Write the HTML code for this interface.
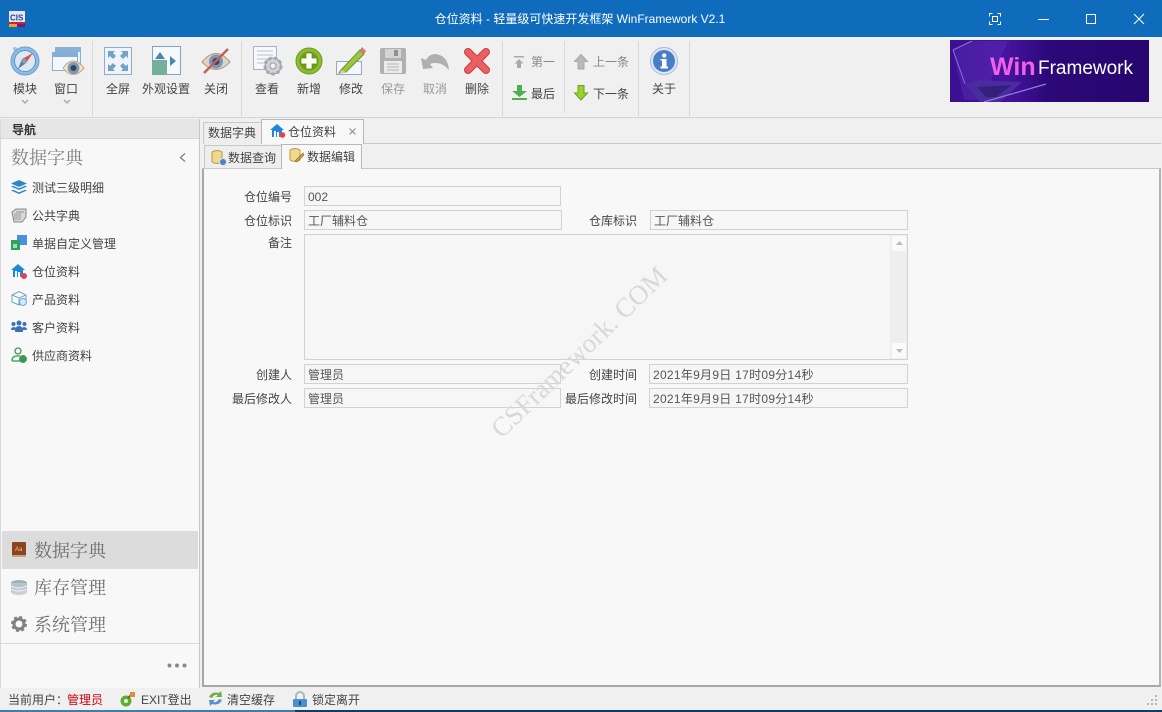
<!DOCTYPE html>
<html><head><meta charset="utf-8">
<style>
html,body{margin:0;padding:0;width:1162px;height:712px;overflow:hidden;background:#f0f0f0}
body{position:relative;font-family:"Liberation Sans","Noto Sans CJK SC",sans-serif;font-size:12px;color:#444}
.a{position:absolute}
.t{position:absolute;white-space:nowrap;line-height:16px;height:16px}
.c{transform:translateX(-50%)}
.r{text-align:right}
.sep{position:absolute;top:41px;width:1px;height:75px;background:#d8d8d8}
.gray{color:#9a9a9a}
.f{position:absolute;box-sizing:border-box;border:1px solid #d2d2d2;background:#f6f6f6;line-height:20px;padding-left:3px;color:#555;white-space:nowrap}
.d{letter-spacing:.28px}
svg{position:absolute;overflow:visible}
.nav{position:absolute;left:32px;font-size:12px;line-height:16px;color:#444;white-space:nowrap}
.big{position:absolute;font-family:"Liberation Serif","Noto Serif CJK SC",serif;font-size:18px;line-height:24px;color:#6e6e6e;white-space:nowrap}
</style></head><body>

<!-- title bar -->
<div class="a" style="left:0;top:0;width:1162px;height:37px;background:#0f6cbd"></div>
<svg style="left:9px;top:11px" width="16" height="16"><rect width="16" height="16" fill="#e8e8f4"/><rect y="11" width="16" height="5" fill="#d02030"/><rect y="13" width="8" height="3" fill="#f0a020"/><rect x="8" y="13" width="8" height="3" fill="#602090"/><text x="1" y="9.500" font-size="8" font-weight="bold" font-family="Liberation Sans" fill="#2040a0">CIS</text></svg>
<div class="t c" style="left:580px;top:11px;color:#fff">仓位资料 - 轻量级可快速开发框架 WinFramework V2.1</div>
<svg style="left:989px;top:13px" width="12" height="12" fill="none" stroke="#fff" stroke-width="1"><path d="M.5 3.5v-3h3M8.500 .5h3v3M11.500 8.500v3h-3M3.500 11.500h-3v-3"/><rect x="3.500" y="3.500" width="5" height="5"/></svg>
<svg style="left:1038px;top:19px" width="11" height="1"><rect width="11" height="1" fill="#fff"/></svg>
<svg style="left:1086px;top:14px" width="10" height="10" fill="none" stroke="#fff"><rect x=".5" y=".5" width="9" height="9"/></svg>
<svg style="left:1134px;top:14px" width="10" height="10" stroke="#fff" fill="none"><path d="M0 0L10 10M10 0L0 10"/></svg>

<!-- toolbar -->
<div class="a" style="left:0;top:37px;width:1162px;height:80px;background:#f0f0f0"></div>
<div class="sep" style="left:92px"></div><div class="sep" style="left:241px"></div><div class="sep" style="left:502px"></div>
<div class="sep" style="left:564px;height:72px"></div><div class="sep" style="left:638px"></div><div class="sep" style="left:689px"></div>
<div class="a" style="left:0;top:117px;width:1162px;height:1px;background:#d5d5d5"></div>

<!-- compass -->
<svg style="left:10px;top:46px" width="30" height="30"><circle cx="5" cy="3" r="2" fill="#a4c2e0"/><circle cx="15" cy="15" r="14" fill="#8fbce6" stroke="#6f9ecb"/><circle cx="15" cy="15" r="10.500" fill="#dce8f4" stroke="#5f93c6"/><path d="M23 7L16 17 12 13z" fill="#d85050"/><path d="M8 23L12 13 16 17z" fill="#5a7ca8"/><circle cx="14" cy="15" r="2.500" fill="#8a9ab0"/></svg>
<div class="t c" style="left:25px;top:81px">模块</div>
<svg style="left:21px;top:99px" width="8" height="5" fill="none" stroke="#aaa" stroke-width="1.500"><path d="M1 1l3 3 3-3"/></svg>
<!-- window eye -->
<svg style="left:52px;top:47px" width="32" height="30"><rect x="3.500" y=".5" width="25" height="18" fill="#eaf2fa" stroke="#90aecb"/><rect x="3" y="0" width="26" height="5" fill="#8ab0d4"/><rect x=".5" y="5.500" width="25" height="18" fill="#f4f8fc" stroke="#90aecb"/><rect x="0" y="5" width="26" height="5" fill="#82aed8"/><path d="M11 21Q21 7 32 21Q21 34 11 21z" fill="#f2e8da" stroke="#c89c78"/><circle cx="21.500" cy="21" r="6" fill="#7d98b2"/><circle cx="21.500" cy="21" r="3" fill="#34485c"/></svg>
<div class="t c" style="left:66px;top:81px">窗口</div>
<svg style="left:63px;top:99px" width="8" height="5" fill="none" stroke="#aaa" stroke-width="1.500"><path d="M1 1l3 3 3-3"/></svg>
<!-- fullscreen -->
<svg style="left:104px;top:47px" width="28" height="28"><rect x=".5" y=".5" width="27" height="27" fill="#eef4fa" stroke="#8fadc8"/><path d="M4 4h7l-2 2 3 3-3 3-3-3-2 2zM24 4v7l-2-2-3 3-3-3 3-3-2-2zM4 24v-7l2 2 3-3 3 3-3 3 2 2zM24 24h-7l2-2-3-3 3-3 3 3 2-2z" fill="#74a2c6"/></svg>
<div class="t c" style="left:118px;top:81px">全屏</div>
<!-- appearance -->
<svg style="left:152px;top:46px" width="29" height="29"><rect x=".5" y=".5" width="28" height="28" fill="#f6f8fa" stroke="#7ea4c2"/><rect x="0" y="14" width="15" height="15" fill="#72b09c"/><path d="M3 13L8 6 13 13z" fill="#4a86b2"/><path d="M18 10L24 15 18 20z" fill="#4a86b2"/></svg>
<div class="t c" style="left:166px;top:81px">外观设置</div>
<!-- close eye -->
<svg style="left:201px;top:48px" width="30" height="27"><path d="M1 14Q15 -3 29 14Q15 29 1 14z" fill="#ddd6c8" stroke="#b09878"/><circle cx="15" cy="13.500" r="7" fill="#7d96b2"/><circle cx="15" cy="13.500" r="3.500" fill="#34485c"/><path d="M27 1L3 25" stroke="#c06060" stroke-width="2.500"/></svg>
<div class="t c" style="left:216px;top:81px">关闭</div>
<!-- view -->
<svg style="left:253px;top:46px" width="31" height="31"><rect x=".5" y=".5" width="23" height="23" fill="#f6f8fc" stroke="#a8b2c0"/><path d="M4 5h16M4 9h16M4 13h12M4 17h9" stroke="#b8c2d2"/><circle cx="20" cy="20" r="8" fill="#d0d4d8" stroke="#999"/><circle cx="20" cy="20" r="8" fill="none" stroke="#a4a8ac" stroke-width="3" stroke-dasharray="3 2.500"/><circle cx="20" cy="20" r="3" fill="#f2f2f2" stroke="#999"/></svg>
<div class="t c" style="left:267px;top:81px">查看</div>
<!-- add -->
<svg style="left:295px;top:47px" width="28" height="28"><circle cx="14" cy="14" r="13" fill="#8cbc2c" stroke="#6c9a1c"/><circle cx="14" cy="14" r="9.500" fill="#6c9e1e"/><path d="M11 6h6v5h5v6h-5v5h-6v-5H6v-6h5z" fill="#fafcf2" stroke="#5a8a14" stroke-width=".7"/></svg>
<div class="t c" style="left:309px;top:81px">新增</div>
<!-- edit -->
<svg style="left:336px;top:46px" width="31" height="30"><rect x=".5" y="15.500" width="25" height="13" fill="#f4f8fc" stroke="#9aa8bc"/><path d="M5 24L24 4 28 8 10 26 3 27z" fill="#9cc840" stroke="#6c9428"/><path d="M24 4l2-3 4 4-2 3z" fill="#d87878"/><path d="M5 24l5 2-6 2z" fill="#e8c8a0"/></svg>
<div class="t c" style="left:351px;top:81px">修改</div>
<!-- save -->
<svg style="left:380px;top:48px" width="26" height="26"><rect width="26" height="26" rx="2" fill="#b0b0b0"/><rect x="5" y="1" width="16" height="9" fill="#d4d4d4"/><rect x="14" y="2" width="4" height="6" fill="#909090"/><rect x="4" y="13" width="18" height="12" fill="#ebebeb"/><path d="M7 16h12M7 19h12M7 22h12" stroke="#b4b4b4"/></svg>
<div class="t c gray" style="left:393px;top:81px">保存</div>
<!-- undo -->
<svg style="left:420px;top:52px" width="30" height="20"><path d="M1 6L3 17 13 16 10 12Q20 8 29 18Q28 4 16 2Q9 2 6 8z" fill="#b0b0b0"/></svg>
<div class="t c gray" style="left:435px;top:81px">取消</div>
<!-- delete -->
<svg style="left:464px;top:48px" width="26" height="26" fill="none" stroke-linecap="round"><path d="M4 4L22 22M22 4L4 22" stroke="#c84040" stroke-width="8"/><path d="M4 4L22 22M22 4L4 22" stroke="#e86060" stroke-width="6"/></svg>
<div class="t c" style="left:477px;top:81px">删除</div>
<!-- nav buttons -->
<svg style="left:513px;top:56px" width="12" height="12"><rect x="1" y="0" width="10" height="1.500" fill="#aaa"/><path d="M6 3L10.500 7.500H8V12H4V7.500H1.500z" fill="#aaa"/></svg>
<div class="t" style="left:531px;top:54px;color:#888">第一</div>
<svg style="left:512px;top:85px" width="15" height="16"><path d="M5 0h5v6h5L7.500 12 0 6h5z" fill="#4cb050"/><rect y="13" width="15" height="2" fill="#4cb050"/></svg>
<div class="t" style="left:531px;top:86px">最后</div>
<svg style="left:574px;top:54px" width="14" height="16"><path d="M7 .5L13.500 7.500H10V15H4V7.500H.5z" fill="#b8b8b8" stroke="#a8a8a8"/></svg>
<div class="t" style="left:593px;top:54px;color:#888">上一条</div>
<svg style="left:574px;top:85px" width="14" height="16"><path d="M4 .5h6V8h3.500L7 15 .5 8H4z" fill="#9ad030" stroke="#6ca018"/></svg>
<div class="t" style="left:593px;top:86px">下一条</div>
<!-- about -->
<svg style="left:650px;top:47px" width="28" height="28"><circle cx="14" cy="14" r="13.500" fill="#dde8f6" stroke="#a4b8d4"/><circle cx="14" cy="14" r="11" fill="#4a7cc8"/><rect x="12" y="12" width="4.500" height="8.500" fill="#fff"/><rect x="10.500" y="12" width="4" height="1.500" fill="#fff"/><rect x="10.500" y="19.500" width="7.500" height="2" fill="#fff"/><circle cx="14.200" cy="8.500" r="2.200" fill="#fff"/></svg>
<div class="t c" style="left:664px;top:81px">关于</div>

<!-- logo -->
<div class="a" style="left:950px;top:40px;width:199px;height:62px;background:linear-gradient(90deg,#3a1090 0%,#45149e 28%,#2c0878 50%,#26066e 100%);overflow:hidden">
<svg style="left:0;top:0" width="199" height="62"><path d="M3 10L22 1 58 1 32 60 14 60z" fill="#6a3cc8" opacity=".3"/><path d="M3 10L22 1M3 10L15 44" stroke="#8a70d8" fill="none"/><path d="M15 44L30 40 72 42 50 62 30 62z" fill="#4a2ca0"/><path d="M27 47L62 45 46 57 36 57z" fill="#33207a"/><path d="M34 62L96 44" stroke="#8f7fe0" stroke-width="1.200"/></svg>
<div class="a" style="left:40px;top:12px;font:bold 25px/30px 'Liberation Sans',sans-serif;color:#f060e8">Win</div>
<div class="a" style="left:88px;top:17px;font:19px/24px 'Liberation Sans',sans-serif;color:#fff">Framework</div>
</div>

<!-- left nav -->
<div class="a" style="left:0;top:119px;width:200px;height:569px;box-sizing:border-box;background:#f8f8f8;border-left:1px solid #d8d8d8;border-right:1px solid #c8c8c8"></div>
<div class="a" style="left:1px;top:119px;width:198px;height:20px;background:#e6e6e6;border-bottom:1px solid #d8d8d8;box-sizing:border-box"></div>
<div class="t" style="left:12px;top:122px;font-weight:bold;color:#333">导航</div>
<div class="big" style="left:11px;top:146px;color:#808080">数据字典</div>
<svg style="left:179px;top:153px" width="7" height="9" fill="none" stroke="#888" stroke-width="1.500"><path d="M6 .500L1.500 4.500 6 8.500"/></svg>

<svg style="left:11px;top:180px" width="16" height="15" fill="#2a88c8"><path d="M8 0l8 3.500-8 3.500L0 3.500z"/><path d="M0 6.500l2-.8 6 2.700 6-2.700 2 .8-8 3.500z"/><path d="M0 10.500l2-.8 6 2.700 6-2.700 2 .8L8 14z"/></svg>
<div class="nav" style="top:180px">测试三级明细</div>
<svg style="left:11px;top:208px" width="16" height="15"><path d="M1 4L5 1h10v8l-4 5H3z" fill="#d8d8d8" stroke="#888"/><path d="M5 4h8" stroke="#999"/><rect x="3" y="5" width="7" height="7" fill="#bbb"/></svg>
<div class="nav" style="top:208px">公共字典</div>
<svg style="left:11px;top:235px" width="16" height="16"><rect x="6" y="0" width="10" height="10" fill="#4a90e0"/><rect x="0" y="5" width="9" height="10" fill="#30a060"/><rect x="2" y="9" width="4" height="4" fill="#a0e0b0"/></svg>
<div class="nav" style="top:236px">单据自定义管理</div>
<svg style="left:11px;top:264px" width="16" height="15"><path d="M7 0L14 6H12V13H2V6H0z" fill="#1e88d8"/><rect x="4" y="7" width="2" height="6" fill="#fff"/><rect x="7" y="8" width="2" height="5" fill="#fff"/><circle cx="13" cy="12" r="3" fill="#e84050"/></svg>
<div class="nav" style="top:264px">仓位资料</div>
<svg style="left:11px;top:291px" width="16" height="16" fill="none" stroke="#6aa8c8"><path d="M1 4L8 .5 15 4V9L8 14 1 11z"/><path d="M1 4L8 7 15 4M8 7V14"/><circle cx="12" cy="11" r="3.500" fill="#d0ecf8"/></svg>
<div class="nav" style="top:292px">产品资料</div>
<svg style="left:11px;top:320px" width="16" height="13" fill="#3a70b8"><circle cx="8" cy="3" r="2.500"/><circle cx="2.500" cy="4" r="2"/><circle cx="13.500" cy="4" r="2"/><path d="M4 12Q4 6 8 6t4 6z"/><path d="M0 10Q0 7 3 7t1 3zM16 10Q16 7 13 7t-1 3z"/></svg>
<div class="nav" style="top:320px">客户资料</div>
<svg style="left:11px;top:347px" width="16" height="16" fill="none" stroke="#3a9a50" stroke-width="1.300"><circle cx="7" cy="4" r="3"/><path d="M1 14Q1 9 6 9h3"/><path d="M1 14h8"/><circle cx="12" cy="12" r="3.300" fill="#3a9a50"/></svg>
<div class="nav" style="top:348px">供应商资料</div>

<div class="a" style="left:2px;top:531px;width:196px;height:38px;background:#dcdcdc"></div>
<svg style="left:12px;top:542px" width="14" height="16"><rect width="14" height="15" rx="1" fill="#8a4420"/><rect x="0" y="13" width="14" height="2" fill="#c8a080"/><text x="3" y="9" font-size="6" fill="#f0c090" font-family="Liberation Sans">Aa</text></svg>
<div class="big" style="left:34px;top:539px">数据字典</div>
<svg style="left:11px;top:580px" width="16" height="15"><ellipse cx="8" cy="3" rx="8" ry="3" fill="#a0b0b8"/><rect y="3" width="16" height="9" fill="#b8c4cc"/><ellipse cx="8" cy="12" rx="8" ry="3" fill="#c8d0d4"/><path d="M0 6q8 4 16 0M0 9q8 4 16 0" stroke="#eef" fill="none"/></svg>
<div class="big" style="left:34px;top:576px">库存管理</div>
<svg style="left:11px;top:616px" width="16" height="16"><circle cx="8" cy="8" r="5" fill="none" stroke="#808080" stroke-width="3"/><circle cx="8" cy="8" r="7" fill="none" stroke="#808080" stroke-width="2" stroke-dasharray="3 2.500"/></svg>
<div class="big" style="left:34px;top:613px">系统管理</div>
<div class="a" style="left:1px;top:643px;width:198px;height:1px;background:#d8d8d8"></div>
<svg style="left:167px;top:663px" width="21" height="5" fill="#888"><circle cx="2.500" cy="2.500" r="2"/><circle cx="10" cy="2.500" r="2"/><circle cx="17.500" cy="2.500" r="2"/></svg>

<!-- tab strips -->
<div class="a" style="left:203px;top:143px;width:958px;height:1px;background:#c8c8c8"></div>
<div class="a" style="left:203px;top:122px;width:59px;height:22px;box-sizing:border-box;background:#eee;border:1px solid #c8c8c8;border-bottom:0"></div>
<div class="t" style="left:208px;top:125px">数据字典</div>
<div class="a" style="left:261px;top:119px;width:103px;height:25px;box-sizing:border-box;background:#f8f8f8;border:1px solid #b8b8b8;border-bottom:0"></div>
<svg style="left:270px;top:124px" width="16" height="14"><path d="M7 0L14 6H12V13H2V6H0z" fill="#1e88d8"/><rect x="4" y="7" width="2" height="6" fill="#fff"/><rect x="7" y="8" width="2" height="5" fill="#fff"/><circle cx="12.500" cy="11" r="2.800" fill="#e84050"/></svg>
<div class="t" style="left:288px;top:124px">仓位资料</div>
<svg style="left:349px;top:128px" width="7" height="7" stroke="#888" fill="none"><path d="M.5 .5l6 6M6.500 .5l-6 6"/></svg>

<!-- inner tabs -->
<div class="a" style="left:204px;top:145px;width:78px;height:24px;box-sizing:border-box;background:#eee;border:1px solid #c8c8c8;border-bottom:0"></div>
<svg style="left:211px;top:150px" width="16" height="16"><path d="M1 2Q6-1 11 2V12Q6 15 1 12z" fill="#f0d890" stroke="#b89840"/><circle cx="12" cy="12" r="3.500" fill="#5080c0" stroke="#dde"/></svg>
<div class="t" style="left:228px;top:150px">数据查询</div>
<div class="a" style="left:281px;top:144px;width:81px;height:25px;box-sizing:border-box;background:#f8f8f8;border:1px solid #b8b8b8;border-bottom:0;z-index:3"></div>
<svg style="left:289px;top:148px;z-index:4" width="16" height="16"><path d="M1 2Q6-1 11 2V12Q6 15 1 12z" fill="#f0d890" stroke="#b89840"/><path d="M6 13L14 5 15 7 8 14z" fill="#c8a040" stroke="#906820" stroke-width=".6"/></svg>
<div class="t" style="left:307px;top:149px;z-index:4">数据编辑</div>

<!-- content -->
<div class="a" style="left:202px;top:168px;width:959px;height:519px;box-sizing:border-box;background:#f8f8f8;border-top:1px solid #c8c8c8;border-left:2px solid #a8a8a8;border-bottom:2px solid #a8a8a8;border-right:2px solid #b4b4b4;z-index:2"></div>
<div style="position:absolute;left:0;top:0;z-index:3;width:1162px;height:712px">
<div class="t r" style="left:212px;width:80px;top:189px">仓位编号</div>
<div class="f" style="left:304px;top:186px;width:257px;height:20px">002</div>
<div class="t r" style="left:212px;width:80px;top:213px">仓位标识</div>
<div class="f" style="left:304px;top:210px;width:258px;height:20px">工厂辅料仓</div>
<div class="t r" style="left:557px;width:80px;top:213px">仓库标识</div>
<div class="f" style="left:650px;top:210px;width:258px;height:20px">工厂辅料仓</div>
<div class="t r" style="left:212px;width:80px;top:235px">备注</div>
<div class="f" style="left:304px;top:234px;width:604px;height:126px"></div>
<div class="a" style="left:890px;top:235px;width:17px;height:124px;background:#eeeeee"></div>
<div class="a" style="left:892px;top:236px;width:14px;height:15px;background:#fafafa"></div>
<div class="a" style="left:892px;top:343px;width:14px;height:15px;background:#fafafa"></div>
<svg style="left:896px;top:241px" width="7" height="4"><path d="M3.500 0L7 4H0z" fill="#bbb"/></svg>
<svg style="left:896px;top:349px" width="7" height="4"><path d="M0 0H7L3.500 4z" fill="#bbb"/></svg>
<div class="t r" style="left:212px;width:80px;top:367px">创建人</div>
<div class="f" style="left:304px;top:364px;width:257px;height:20px">管理员</div>
<div class="t r" style="left:557px;width:80px;top:367px">创建时间</div>
<div class="f d" style="left:649px;top:364px;width:259px;height:20px">2021年9月9日 17时09分14秒</div>
<div class="t r" style="left:212px;width:80px;top:391px">最后修改人</div>
<div class="f" style="left:304px;top:388px;width:257px;height:20px">管理员</div>
<div class="t r" style="left:557px;width:80px;top:391px">最后修改时间</div>
<div class="f d" style="left:649px;top:388px;width:259px;height:20px">2021年9月9日 17时09分14秒</div>
<div class="a" style="left:579px;top:352px;width:0;height:0"><div style="position:absolute;left:-125px;top:-16px;width:250px;text-align:center;white-space:nowrap;font:27px/32px 'Liberation Serif',serif;color:#d8d8d8;transform:rotate(-44deg)">CSFramework. COM</div></div>
</div>

<!-- status bar -->
<div class="a" style="left:0;top:688px;width:1162px;height:22px;background:#f0f0f0"></div>
<div class="a" style="left:0;top:710px;width:295px;height:2px;background:#3f7ea8"></div>
<div class="a" style="left:295px;top:710px;width:867px;height:2px;background:#123c66"></div>
<div class="t" style="left:8px;top:692px">当前用户：</div>
<div class="t" style="left:67px;top:692px;color:#d00010">管理员</div>
<svg style="left:120px;top:691px" width="16" height="16"><circle cx="6" cy="10" r="5.500" fill="#5cae30"/><circle cx="6" cy="10" r="2" fill="#e8f8d8"/><path d="M8 7L13 2" stroke="#806020" stroke-width="2"/><rect x="10" y="1" width="5" height="5" fill="#d89040"/></svg>
<div class="t" style="left:141px;top:692px">EXIT登出</div>
<svg style="left:208px;top:691px" width="15" height="15"><path d="M1 6Q4 0 11 2L13 0 14 6 8 6 10 4Q6 3 4 7z" fill="#6cae40"/><path d="M14 9Q11 15 4 13L2 15 1 9 7 9 5 11Q9 12 11 8z" fill="#5a90c8"/></svg>
<div class="t" style="left:227px;top:692px">清空缓存</div>
<svg style="left:293px;top:691px" width="14" height="16"><path d="M3 8V5a4 4 0 018 0v3" fill="none" stroke="#a8b8c8" stroke-width="2"/><rect y="8" width="14" height="8" rx="1" fill="#4a90d0"/><rect x="6" y="10" width="2" height="4" fill="#1a4a80"/></svg>
<div class="t" style="left:312px;top:692px">锁定离开</div>
<svg style="left:1147px;top:695px" width="11" height="11" fill="#b8b8b8"><rect x="8" y="0" width="2" height="2"/><rect x="4" y="4" width="2" height="2"/><rect x="8" y="4" width="2" height="2"/><rect x="0" y="8" width="2" height="2"/><rect x="4" y="8" width="2" height="2"/><rect x="8" y="8" width="2" height="2"/></svg>
</body></html>
